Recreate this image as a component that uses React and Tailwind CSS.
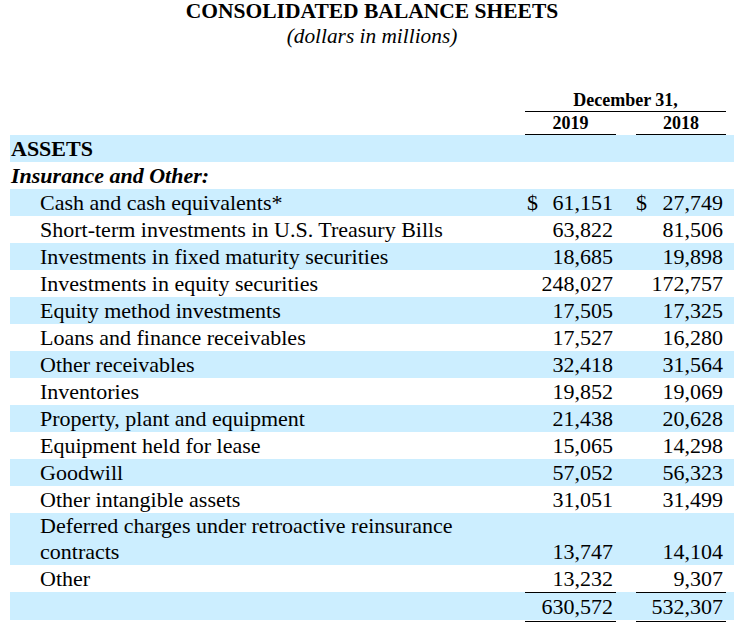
const rows = [
  { label: "Cash and cash equivalents*", y19: "61,151", y18: "27,749", dollar: true },
  { label: "Short-term investments in U.S. Treasury Bills", y19: "63,822", y18: "81,506" },
  { label: "Investments in fixed maturity securities", y19: "18,685", y18: "19,898" },
  { label: "Investments in equity securities", y19: "248,027", y18: "172,757" },
  { label: "Equity method investments", y19: "17,505", y18: "17,325" },
  { label: "Loans and finance receivables", y19: "17,527", y18: "16,280" },
  { label: "Other receivables", y19: "32,418", y18: "31,564" },
  { label: "Inventories", y19: "19,852", y18: "19,069" },
  { label: "Property, plant and equipment", y19: "21,438", y18: "20,628" },
  { label: "Equipment held for lease", y19: "15,065", y18: "14,298" },
  { label: "Goodwill", y19: "57,052", y18: "56,323" },
  { label: "Other intangible assets", y19: "31,051", y18: "31,499" },
  {
    label: ["Deferred charges under retroactive reinsurance", "contracts"],
    y19: "13,747",
    y18: "14,104",
  },
  { label: "Other", y19: "13,232", y18: "9,307" },
];

function Amount({ value, dollar, first, border }) {
  return (
    <div
      className={`flex items-end justify-between ${
        first ? "w-[91px] pl-[2px] pr-[3px]" : "w-[90px] pl-0 pr-[3px]"
      } ${border ? "border-t border-black" : ""}`}
    >
      <span>{dollar ? "$" : ""}</span>
      <span>{value}</span>
    </div>
  );
}

function Row({ row, shaded }) {
  const multi = Array.isArray(row.label);
  return (
    <div
      className={`flex ${multi ? "h-[52px] leading-[26px]" : "h-[27px] leading-[27px]"} ${
        shaded ? "bg-[#cceeff]" : ""
      }`}
    >
      <div className="flex-1 pl-[30px]">
        {multi ? (
          <>
            {row.label[0]}
            <br />
            {row.label[1]}
          </>
        ) : (
          row.label
        )}
      </div>
      <Amount value={row.y19} dollar={row.dollar} first />
      <div className="w-[20px]" />
      <Amount value={row.y18} dollar={row.dollar} />
      <div className="w-[8px]" />
    </div>
  );
}

export default function App() {
  return (
    <div
      className="w-[736px] h-[627px] bg-white text-black text-[22px] overflow-hidden"
      style={{ fontFamily: '"Liberation Serif", "Times New Roman", serif' }}
    >
      {/* Title */}
      <div className="pl-[10px] pr-[2px] text-center">
        <div className="font-bold text-[21.5px] leading-[22px]">CONSOLIDATED BALANCE SHEETS</div>
        <div className="italic text-[21.33px] leading-[20px] mt-[4px]">(dollars in millions)</div>
      </div>

      <div className="ml-[10px] w-[724px] mt-[43px]">
        {/* Column heads */}
        <div className="flex text-[18px] font-bold leading-[22px]">
          <div className="flex-1" />
          <div className="w-[201px] text-center border-b border-black h-[23px]">December 31,</div>
          <div className="w-[8px]" />
        </div>
        <div className="flex text-[18px] font-bold leading-[22px]">
          <div className="flex-1" />
          <div className="w-[91px] text-center border-b border-black h-[23px]">2019</div>
          <div className="w-[20px]" />
          <div className="w-[90px] text-center border-b border-black h-[23px]">2018</div>
          <div className="w-[8px]" />
        </div>

        {/* Body */}
        <div className="h-[27px] leading-[27px] bg-[#cceeff] font-bold pl-[1px]">ASSETS</div>
        <div className="h-[27px] leading-[27px] font-bold italic pl-[1px]">Insurance and Other:</div>
        {rows.map((row, i) => (
          <Row key={i} row={row} shaded={i % 2 === 0} />
        ))}

        {/* Total */}
        <div className="flex h-[28px] leading-[26px] bg-[#cceeff]">
          <div className="flex-1" />
          <Amount value="630,572" first border />
          <div className="w-[20px]" />
          <Amount value="532,307" border />
          <div className="w-[8px]" />
        </div>
        <div className="flex mt-[1px]">
          <div className="flex-1" />
          <div className="w-[91px] h-px bg-black" />
          <div className="w-[20px]" />
          <div className="w-[90px] h-px bg-black" />
          <div className="w-[8px]" />
        </div>
      </div>
    </div>
  );
}
